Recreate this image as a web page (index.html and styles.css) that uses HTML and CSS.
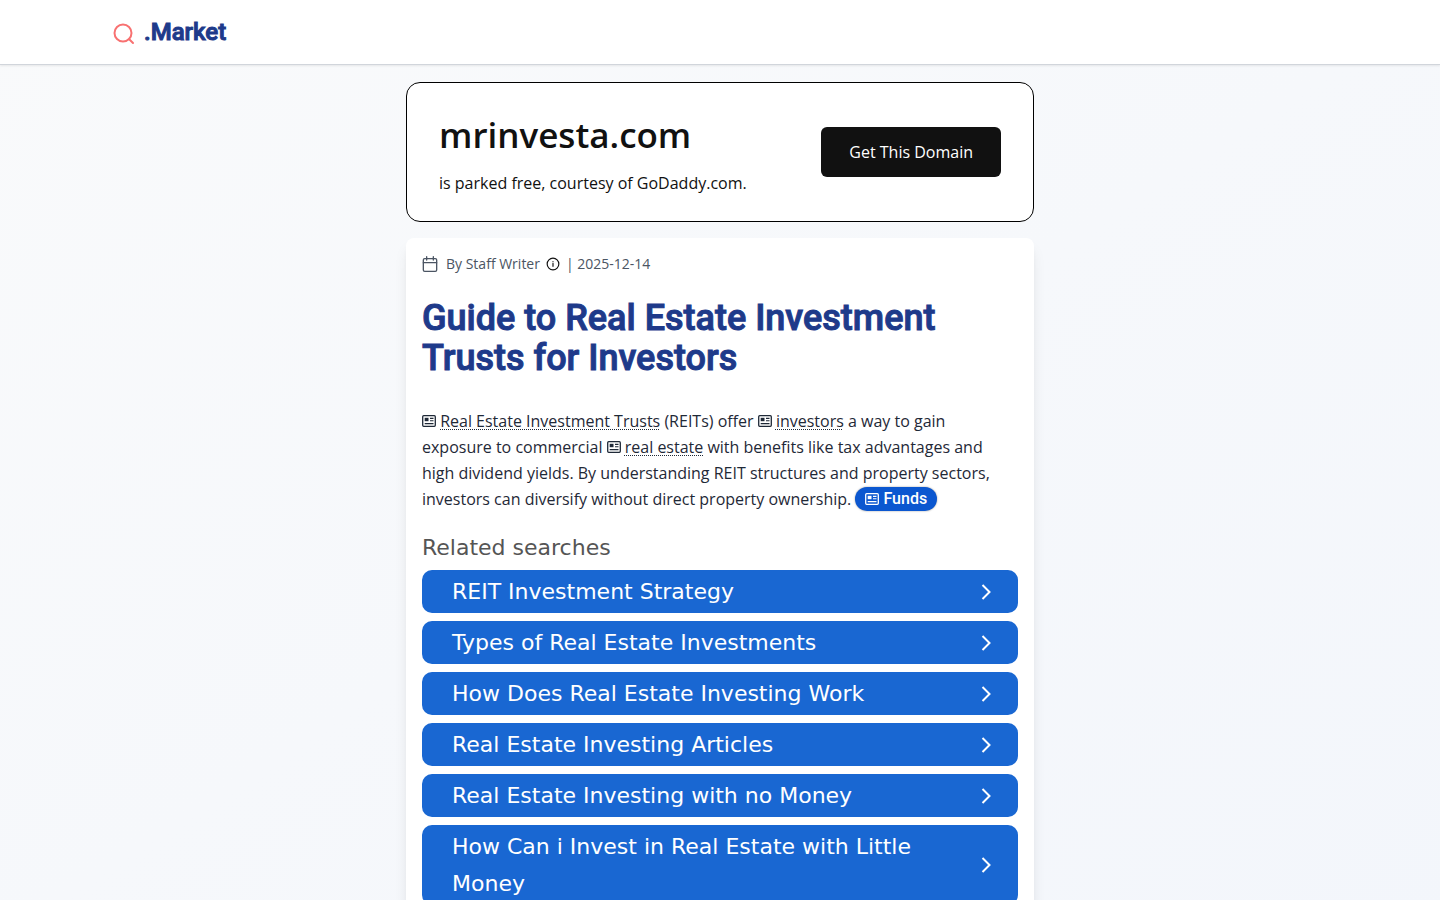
FILE: index.html
```
<!DOCTYPE html>
<html lang="en">
<head>
  <meta charset="UTF-8" />
  <meta name="viewport" content="width=device-width, initial-scale=1" />
  <title>Guide to Real Estate Investment Trusts for Investors</title>
  <link rel="stylesheet" href="styles.css">
</head>
<body>
  <!-- shared icons -->
  <svg class="sprite" aria-hidden="true">
    <symbol id="news" viewBox="0 0 14 12">
      <rect x="0.7" y="0.7" width="12.6" height="10.6" rx="1" fill="none" stroke="currentColor" stroke-width="1.3" />
      <rect x="2.7" y="2.8" width="3.8" height="3.4" fill="currentColor" />
      <path d="M8 3.4h3.5M8 5.8h3.5M2.7 8.6h8.8" fill="none" stroke="currentColor" stroke-width="1.1" />
    </symbol>
    <symbol id="chevron" viewBox="0 0 12 18">
      <path d="M2.5 2l7 7-7 7" fill="none" stroke="currentColor" stroke-width="2" />
    </symbol>
  </svg>

  <header class="site-header">
    <div class="header-inner">
      <a class="brand" href="#">
        <svg class="brand-icon" viewBox="0 0 24 24" fill="none" stroke="currentColor" stroke-width="2" stroke-linecap="round" stroke-linejoin="round" aria-hidden="true">
          <circle cx="11" cy="11" r="8.5" />
          <path d="M21 21l-3.8-3.8" />
        </svg>
        <span>.Market</span>
      </a>
    </div>
  </header>

  <main class="container">
    <section class="domain">
      <div>
        <h2>mrinvesta.com</h2>
        <p>is parked free, courtesy of GoDaddy.com.</p>
      </div>
      <a class="domain-btn" href="#">Get This Domain</a>
    </section>

    <article class="card">
      <div class="meta">
        <svg class="meta-calendar" viewBox="0 0 24 24" fill="none" stroke="currentColor" stroke-width="2" stroke-linecap="round" stroke-linejoin="round" aria-hidden="true">
          <rect x="2" y="4" width="20" height="19" rx="2" />
          <path d="M7 1v5M17 1v5M2 10h20" />
        </svg>
        <span>By Staff Writer</span>
        <button class="meta-info" type="button" aria-label="About the author">
          <svg viewBox="0 0 24 24" fill="none" stroke="currentColor" stroke-width="2" stroke-linecap="round">
            <circle cx="12" cy="12" r="10" />
            <path d="M12 16v-5M12 8v0" />
          </svg>
        </button>
        <span>| 2025-12-14</span>
      </div>

      <h1>Guide to Real Estate Investment Trusts for Investors</h1>

      <p class="intro">
        <svg class="news" aria-hidden="true"><use href="#news" /></svg>
        <a class="term" href="#">Real Estate Investment Trusts</a> (REITs) offer
        <svg class="news" aria-hidden="true"><use href="#news" /></svg>
        <a class="term" href="#">investors</a> a way to gain exposure to commercial
        <svg class="news" aria-hidden="true"><use href="#news" /></svg>
        <a class="term" href="#">real estate</a> with benefits like tax advantages and high dividend yields. By understanding REIT structures and property sectors, investors can diversify without direct property ownership.
        <a class="tag" href="#"><svg class="news" aria-hidden="true"><use href="#news" /></svg>Funds</a>
      </p>

      <nav class="related" aria-labelledby="related-title">
        <h3 id="related-title">Related searches</h3>
        <a href="#"><span>REIT Investment Strategy</span><svg aria-hidden="true"><use href="#chevron" /></svg></a>
        <a href="#"><span>Types of Real Estate Investments</span><svg aria-hidden="true"><use href="#chevron" /></svg></a>
        <a href="#"><span>How Does Real Estate Investing Work</span><svg aria-hidden="true"><use href="#chevron" /></svg></a>
        <a href="#"><span>Real Estate Investing Articles</span><svg aria-hidden="true"><use href="#chevron" /></svg></a>
        <a href="#"><span>Real Estate Investing with no Money</span><svg aria-hidden="true"><use href="#chevron" /></svg></a>
        <a href="#"><span>How Can i Invest in Real Estate with Little Money</span><svg aria-hidden="true"><use href="#chevron" /></svg></a>
      </nav>
    </article>
  </main>
</body>
</html>
```

FILE: styles.css
```
* {
  box-sizing: border-box;
}
body {
  margin: 0;
  min-height: 100vh;
  font-family: "Open Sans", Arial, sans-serif;
  font-size: 16px;
  line-height: 26px;
  color: #1f2937;
  background: linear-gradient(to bottom right, #f9fafb, #f3f6fb);
}
a {
  color: inherit;
  text-decoration: none;
}
h1, h2, h3, p {
  margin: 0;
}
.sprite {
  display: none;
}

/* header */
.site-header {
  background: #fff;
  border-bottom: 1px solid #d1d5db;
  box-shadow: 0 1px 2px rgba(0, 0, 0, 0.08);
}
.header-inner {
  display: flex;
  max-width: 1248px;
  margin: 0 auto;
  padding: 16px;
}
.brand {
  display: flex;
  align-items: center;
  gap: 8px;
  height: 32px;
  font-family: Roboto, Arial, sans-serif;
  font-size: 24px;
  line-height: 32px;
  font-weight: 500;
  -webkit-text-stroke: 1px;
  color: #1e3a8a;
}
.brand-icon {
  width: 24px;
  height: 24px;
  margin-top: 4px;
  color: #f87171;
}

.container {
  max-width: 660px;
  margin: 0 auto;
  padding: 17px 16px;
}

/* parked domain banner */
.domain {
  display: flex;
  align-items: center;
  justify-content: space-between;
  gap: 16px;
  padding: 25px 32px;
  background: #fff;
  border: 1px solid #000;
  border-radius: 14px;
  color: #111;
}
.domain h2 {
  margin-bottom: 8px;
  font-size: 35px;
  line-height: 54px;
  font-weight: 600;
}
.domain-btn {
  padding: 12px 28px;
  border-radius: 6px;
  background: #111;
  color: #fff;
}

/* article */
.card {
  margin-top: 16px;
  padding: 16px;
  background: #fff;
  border-radius: 8px;
  box-shadow: 0 10px 15px -3px rgba(0, 0, 0, 0.1), 0 4px 6px -4px rgba(0, 0, 0, 0.1);
}
.meta {
  display: flex;
  align-items: center;
  gap: 6px;
  font-size: 14px;
  line-height: 20px;
  color: #4b5563;
}
.meta-calendar {
  width: 16px;
  height: 16px;
  margin-right: 2px;
}
.meta-info {
  display: flex;
  padding: 0;
  border: 0;
  background: none;
  color: #111;
}
.meta-info svg {
  width: 14px;
  height: 14px;
}
h1 {
  margin: 24px 0 30px;
  font-family: Roboto, Arial, sans-serif;
  font-size: 36px;
  line-height: 40px;
  font-weight: 500;
  -webkit-text-stroke: 1px;
  color: #1e3a8a;
}
.news {
  width: 14px;
  height: 12px;
}
.term {
  text-decoration: underline dotted 1px;
  text-underline-offset: 2px;
}
.tag {
  display: inline-flex;
  align-items: center;
  gap: 4px;
  padding: 0 10px;
  border-radius: 12px;
  font-family: Roboto, Arial, sans-serif;
  font-weight: 500;
  line-height: 24px;
  background: #0b57d0;
  box-shadow: 0 0 2px rgba(0, 0, 0, 0.4);
  color: #fff;
}

/* related searches */
.related {
  display: flex;
  flex-direction: column;
  gap: 8px;
  margin-top: 21px;
  font-family: "DejaVu Sans", Verdana, sans-serif;
  font-size: 22px;
  line-height: 37px;
}
.related h3 {
  font-size: 22px;
  line-height: 29px;
  font-weight: 400;
  color: #555;
}
.related a {
  display: flex;
  align-items: center;
  justify-content: space-between;
  gap: 24px;
  padding: 3px 26px 3px 30px;
  border-radius: 10px;
  background: #1967d2;
  color: #fff;
}
.related svg {
  flex: none;
  width: 12px;
  height: 18px;
}
```
